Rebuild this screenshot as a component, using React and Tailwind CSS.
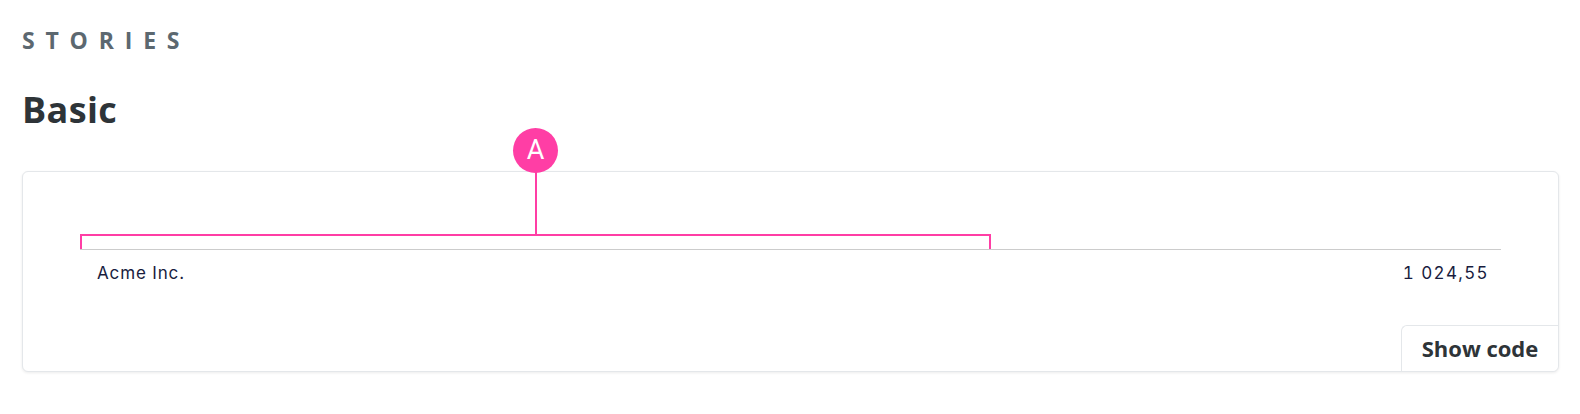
import React from 'react';

const heading = { fontFamily: '"Open Sans", "Noto Sans", sans-serif' };
const body = { fontFamily: 'Inter, "Noto Sans", sans-serif' };

// pink bracket + lettered marker drawn over the table's first column
function Annotation() {
  return (
    <>
      <div className="absolute left-0 top-[-15px] h-[15px] w-[911px] border-2 border-b-0 border-[#ff3ea5]" />
      <div className="absolute left-[455px] top-[-77px] h-[62px] w-[2px] bg-[#ff3ea5]" />
      <div
        className="absolute left-[433px] top-[-121px] w-[45px] h-[45px] rounded-full bg-[#ff3ea5] text-white flex items-center justify-center text-[27px] leading-none"
        style={{ fontFamily: 'Roboto, "Noto Sans", sans-serif' }}
      >
        A
      </div>
    </>
  );
}

export default function App() {
  return (
    <div className="min-h-screen bg-white pt-[29px] pl-[22px] pr-[21px]" style={heading}>
      <div className="text-[23px] leading-none font-bold uppercase tracking-[0.47em] text-[#5c6870]">Stories</div>
      <h2 className="mt-[40px] text-[36px] leading-none font-bold tracking-[0.01em] text-[#2e3438]">Basic</h2>

      <div className="mt-[43px] flex flex-col rounded-[6px] border border-[#e4e7ea] bg-white shadow-[0_1px_3px_rgba(0,0,0,0.08)]">
        <div className="px-[57px] pt-[77px]">
          <div className="relative">
            <Annotation />
            <div className="border-t border-[#cccccc] flex justify-between py-[11px] text-[17px] leading-6 text-[#181c3e] tracking-[0.05em]" style={body}>
              <span className="pl-[17px]">Acme Inc.</span>
              <span className="pr-[12px] tabular-nums tracking-[0.08em]">1 024,55</span>
            </div>
          </div>
        </div>

        <div className="mt-[29px] flex justify-end">
          <button className="w-[157px] h-[46px] rounded-tl-[6px] rounded-br-[6px] border-t border-l border-[#e4e7ea] bg-white text-[22px] font-bold text-[#2e3438]">
            Show code
          </button>
        </div>
      </div>
    </div>
  );
}
